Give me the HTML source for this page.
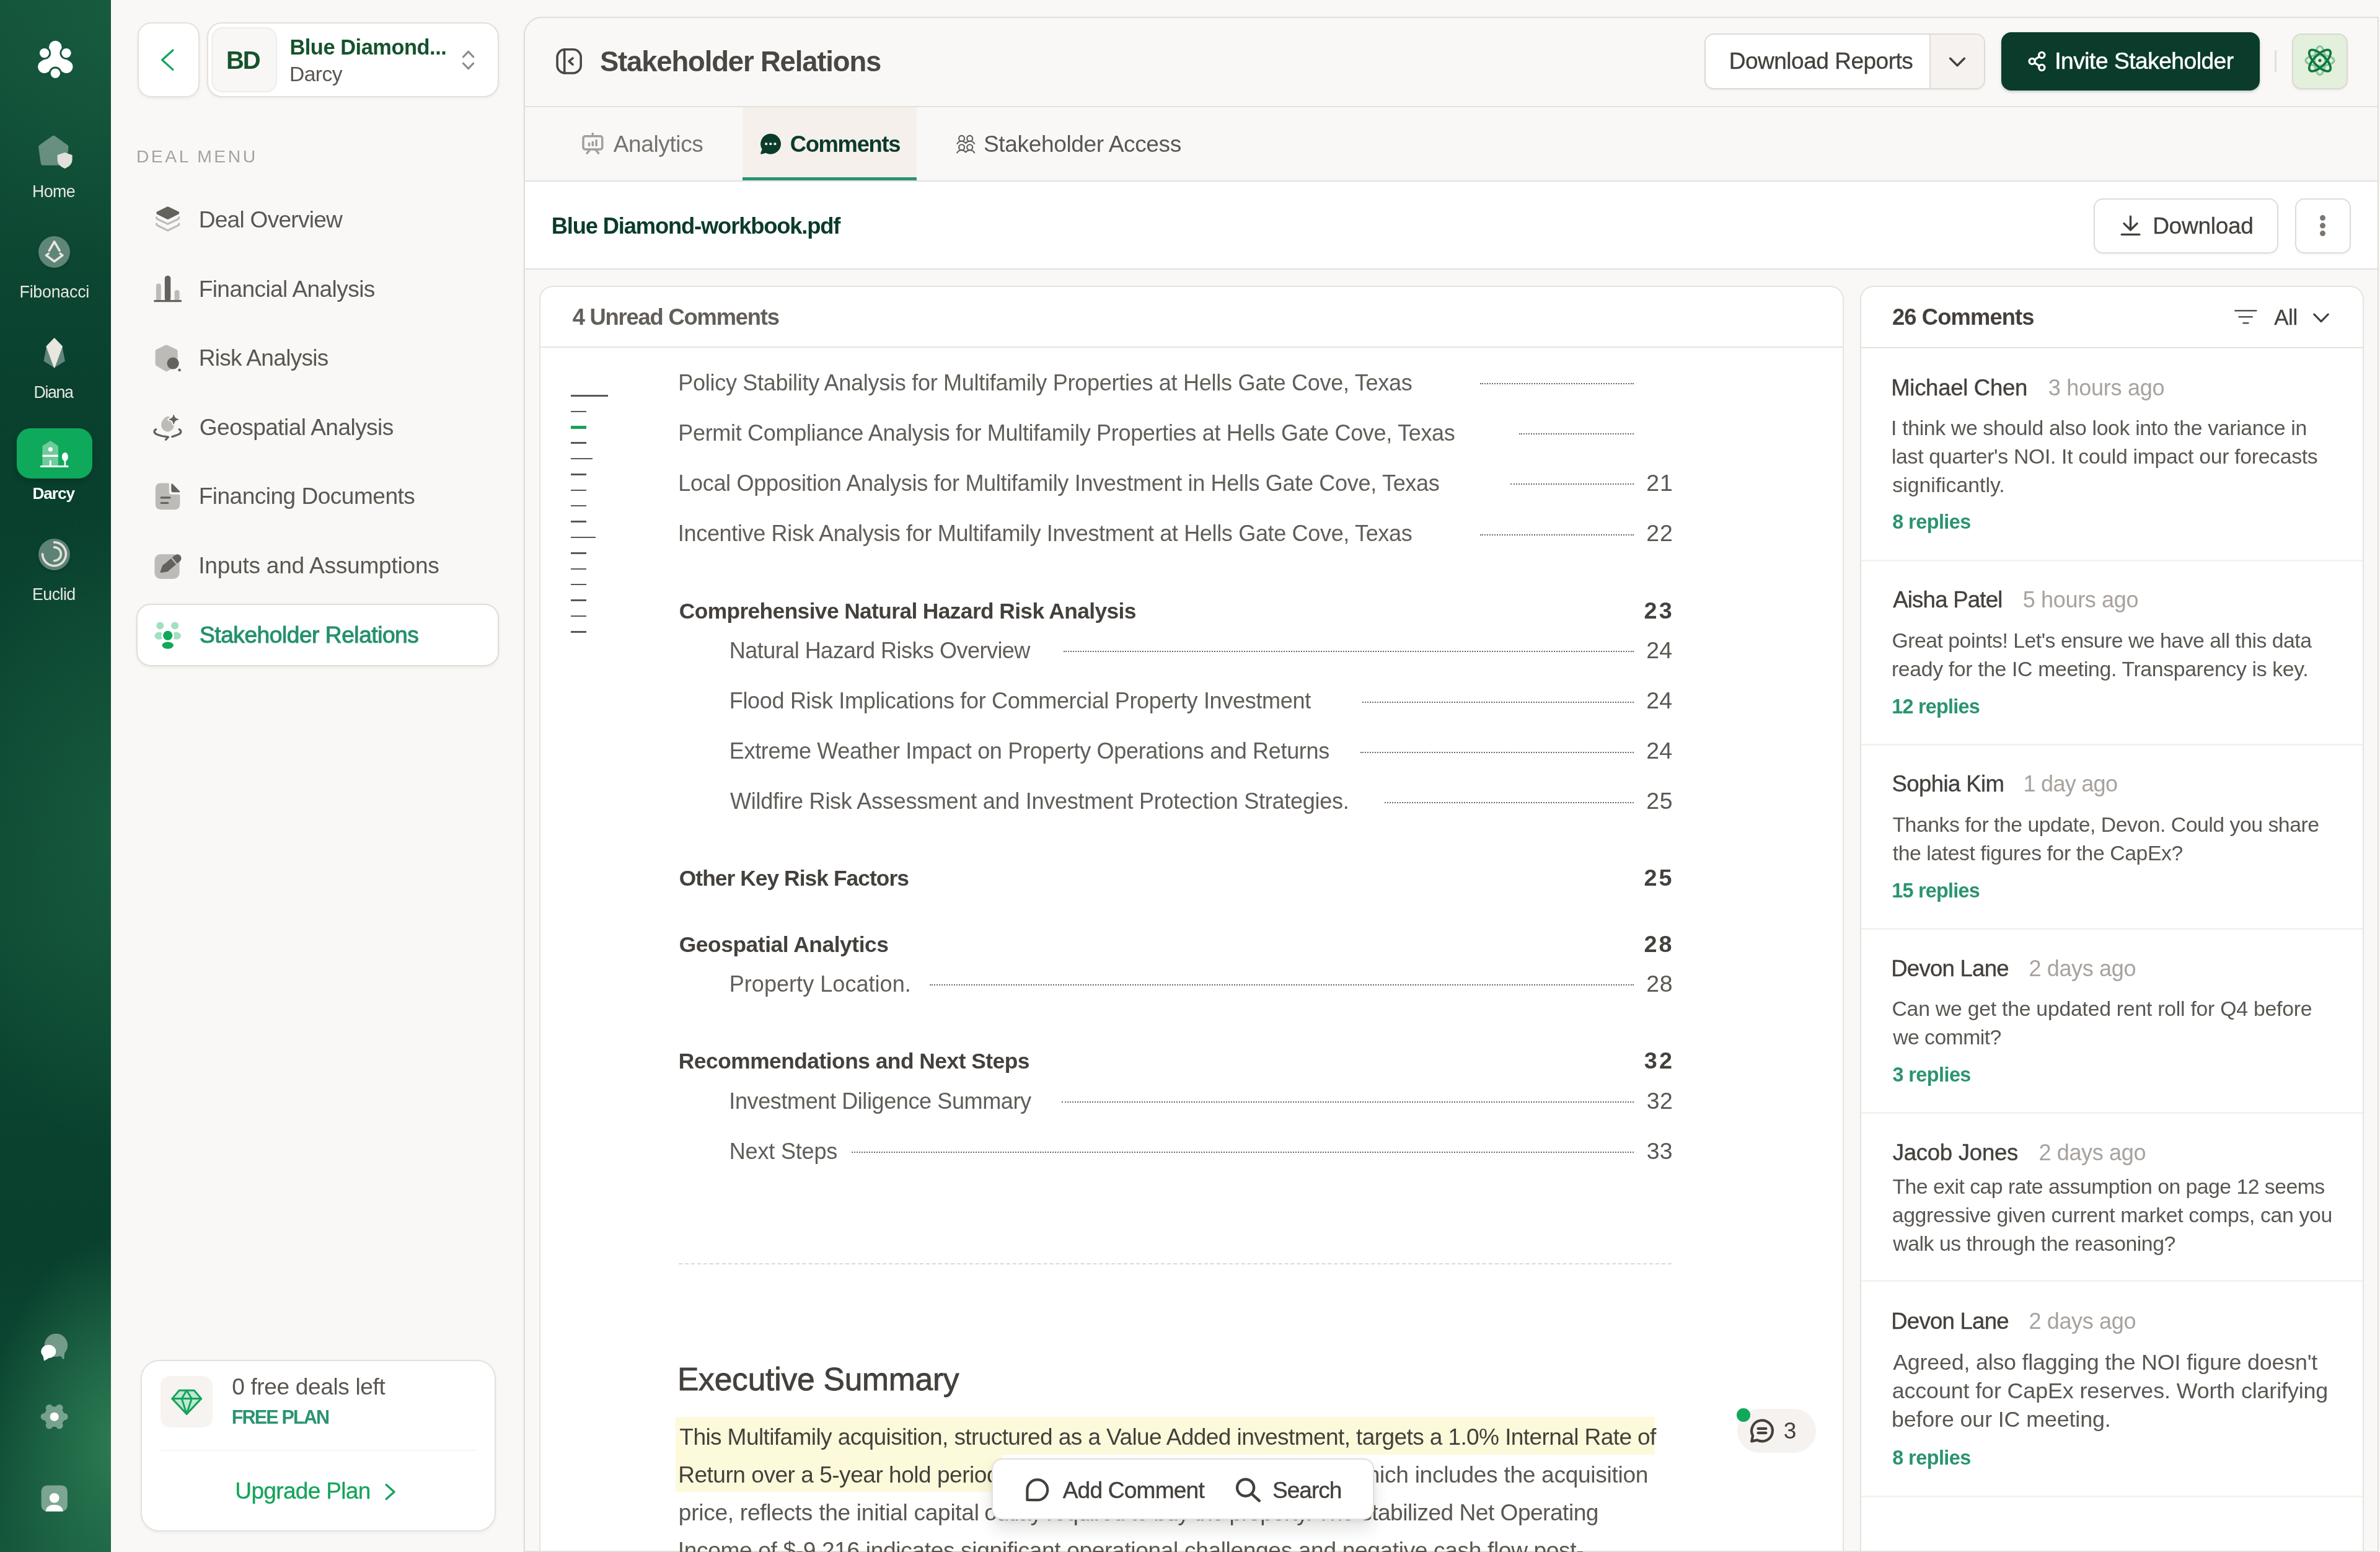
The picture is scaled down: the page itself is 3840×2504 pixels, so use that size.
<!DOCTYPE html>
<html lang="en"><head><meta charset="utf-8"><title>Stakeholder Relations</title>
<style>html,body{margin:0;padding:0}
body{width:3840px;height:2504px;overflow:hidden;background:#f9f8f6;font-family:"Liberation Sans",sans-serif;position:relative}
#app{position:absolute;left:0;top:0;width:3840px;height:2504px;overflow:hidden;will-change:transform}
.t{position:absolute;white-space:nowrap;line-height:1;font-kerning:normal}
.b{position:absolute;box-sizing:border-box}
svg{position:absolute;left:0;top:0;overflow:visible}
@media (max-width:2400px){html{zoom:0.5}}
</style></head><body><div id="app">
<!-- rail -->
<div class="b" style="left:0;top:0;width:179px;height:2504px;background:
radial-gradient(ellipse 210px 340px at 108% 2330px, #2d7d54 0%, rgba(45,125,84,0.6) 40%, rgba(45,125,84,0) 100%),
radial-gradient(ellipse 300px 520px at 110% 1340px, rgba(27,98,66,0.7) 0%, rgba(27,98,66,0) 100%),
radial-gradient(ellipse 320px 380px at 110% 30px, rgba(28,98,66,0.55) 0%, rgba(28,98,66,0) 100%),
linear-gradient(180deg,#12533a 0px,#0f4c36 260px,#09412e 620px,#083f2d 820px,#0c4632 1150px,#0e4a34 1500px,#09412e 1850px,#083f2d 2020px,#0d4933 2250px,#14573b 2504px)"></div>
<!-- darcy active button -->
<div class="b" style="left:27px;top:691px;width:122px;height:81px;border-radius:22px;background:#0fa95b;box-shadow:0 4px 10px rgba(0,0,0,0.18)"></div>
<!-- fibonacci / euclid discs -->
<div class="b" style="left:62px;top:381px;width:51px;height:51px;border-radius:50%;background:rgba(255,255,255,0.34);box-shadow:0 2px 5px rgba(0,0,0,0.18)"></div>
<div class="b" style="left:62px;top:868.5px;width:51px;height:51px;border-radius:50%;background:rgba(255,255,255,0.34);box-shadow:0 2px 5px rgba(0,0,0,0.18)"></div>

<!-- sidebar: back button + deal selector -->
<div class="b" style="left:222px;top:36px;width:100px;height:120.5px;border-radius:22px;background:#fff;border:2px solid #e5e1dd;box-shadow:0 2px 5px rgba(60,40,20,0.07)"></div>
<div class="b" style="left:333.5px;top:36px;width:471px;height:120.5px;border-radius:24px;background:#fff;border:2px solid #e3dfdb;box-shadow:0 2px 5px rgba(60,40,20,0.05)"></div>
<div class="b" style="left:341px;top:43.5px;width:105.5px;height:105.5px;border-radius:18px;background:#f9f7f5;border:2px solid #f1ece7"></div>
<!-- active menu item -->
<div class="b" style="left:220px;top:974px;width:584.5px;height:101px;border-radius:23px;background:#fff;border:2px solid #e1ddd9;box-shadow:0 2px 5px rgba(60,40,20,0.07)"></div>
<!-- plan card -->
<div class="b" style="left:227px;top:2193.5px;width:572.5px;height:277.5px;border-radius:30px;background:#fff;border:2px solid #e4e1dd;box-shadow:0 2px 5px rgba(60,40,20,0.05)"></div>
<div class="b" style="left:259px;top:2219.5px;width:84px;height:83.5px;border-radius:16px;background:#f6f3f0"></div>
<div class="b" style="left:259px;top:2339px;width:508.5px;height:2px;background:#f8f6f4"></div>

<!-- main panel -->
<div class="b" style="left:845px;top:27px;width:2993px;height:2477px;border:2px solid #e1ded9;border-top-left-radius:30px;background:#f9f8f6;box-shadow:-1px 0 2px rgba(160,110,90,0.07)"></div>
<div class="b" style="left:847px;top:171px;width:2989px;height:2px;background:#e4e1dd"></div>
<!-- active tab -->
<div class="b" style="left:1197.5px;top:173px;width:281.5px;height:118px;background:#f5f0ec"></div>
<div class="b" style="left:1197.5px;top:285.5px;width:281.5px;height:6px;background:#2a9470"></div>
<div class="b" style="left:847px;top:291px;width:2989px;height:2px;background:#e4e1dd"></div>
<!-- file header -->
<div class="b" style="left:847px;top:293px;width:2989px;height:140px;background:#fff"></div>
<div class="b" style="left:847px;top:433px;width:2989px;height:2px;background:#e4e1dd"></div>

<!-- header buttons -->
<div class="b" style="left:2750px;top:54px;width:453px;height:89.5px;border-radius:15px;background:#fff;border:2px solid #dedad5;box-shadow:0 2px 3px rgba(60,40,20,0.06);overflow:hidden">
  <div class="b" style="left:361px;top:0;width:92px;height:100%;background:#f6f2ef;border-left:2px solid #e0dcd8"></div>
</div>
<div class="b" style="left:3229px;top:52px;width:416.5px;height:93.5px;border-radius:16px;background:#0a3b2b;box-shadow:0 2px 4px rgba(10,59,43,0.25)"></div>
<div class="b" style="left:3670px;top:81px;width:2.5px;height:35px;background:#e2ded9"></div>
<div class="b" style="left:3697.5px;top:54px;width:90px;height:89.5px;border-radius:15px;background:#e3f0dc;border:2.5px solid #dcd8d3;box-shadow:0 2px 3px rgba(60,40,20,0.08)"></div>
<!-- download + kebab -->
<div class="b" style="left:3377.5px;top:319.5px;width:298px;height:89.5px;border-radius:15px;background:#fff;border:2px solid #dfdbd7;box-shadow:0 2px 3px rgba(60,40,20,0.05)"></div>
<div class="b" style="left:3702.5px;top:319.5px;width:90px;height:89.5px;border-radius:15px;background:#fff;border:2px solid #dfdbd7;box-shadow:0 2px 3px rgba(60,40,20,0.05)"></div>

<!-- document card -->
<div class="b" style="left:870px;top:461px;width:2105px;height:2041px;border:2px solid #e6e3df;border-bottom:none;border-radius:22px 22px 0 0;background:#fff"></div>
<div class="b" style="left:872px;top:559px;width:2101px;height:2px;background:#e6e3df"></div>
<!-- comments card -->
<div class="b" style="left:3000.5px;top:461px;width:813px;height:2041px;border:2px solid #e6e3df;border-bottom:none;border-radius:22px 22px 0 0;background:#fff"></div>
<div class="b" style="left:3002.5px;top:560px;width:809px;height:2px;background:#e6e3df"></div>

<!-- minimap -->
<div class="b" style="left:921px;top:637.2px;width:60px;height:2.6px;background:#5b5752"></div>
<div class="b" style="left:921px;top:662.7px;width:25px;height:2.6px;background:#5b5752"></div>
<div class="b" style="left:921px;top:687.0px;width:25px;height:5.0px;background:#16a35c"></div>
<div class="b" style="left:921px;top:713.2px;width:25px;height:2.6px;background:#5b5752"></div>
<div class="b" style="left:921px;top:738.7px;width:35px;height:2.6px;background:#5b5752"></div>
<div class="b" style="left:921px;top:764.2px;width:25px;height:2.6px;background:#5b5752"></div>
<div class="b" style="left:921px;top:789.7px;width:25px;height:2.6px;background:#5b5752"></div>
<div class="b" style="left:921px;top:814.7px;width:25px;height:2.6px;background:#5b5752"></div>
<div class="b" style="left:921px;top:840.2px;width:25px;height:2.6px;background:#5b5752"></div>
<div class="b" style="left:921px;top:865.7px;width:40px;height:2.6px;background:#5b5752"></div>
<div class="b" style="left:921px;top:891.2px;width:25px;height:2.6px;background:#5b5752"></div>
<div class="b" style="left:921px;top:916.7px;width:25px;height:2.6px;background:#5b5752"></div>
<div class="b" style="left:921px;top:941.7px;width:25px;height:2.6px;background:#5b5752"></div>
<div class="b" style="left:921px;top:967.2px;width:25px;height:2.6px;background:#5b5752"></div>
<div class="b" style="left:921px;top:992.7px;width:25px;height:2.6px;background:#5b5752"></div>
<div class="b" style="left:921px;top:1018.2px;width:25px;height:2.6px;background:#5b5752"></div>

<!-- dashed separator -->
<div class="b" style="left:1095px;top:2038px;width:1602px;height:0;border-top:2.5px dashed #dcd9d5"></div>
<!-- highlight -->
<div class="b" style="left:1090px;top:2285.5px;width:1580px;height:61px;background:#fdfadb"></div>
<div class="b" style="left:1090px;top:2346.5px;width:526px;height:60.5px;background:#fdfadb"></div>
<!-- comment badge -->
<div class="b" style="left:2802.5px;top:2273px;width:127px;height:71px;border-radius:36px;background:#f5f2ef"></div>
<div class="b" style="left:2802px;top:2272px;width:22px;height:22px;border-radius:50%;background:#10a85a"></div>
<div class="b" style="left:2387.5px;top:618.3px;width:248.5px;height:0;border-top:2.5px dotted #6b6762"></div>
<div class="b" style="left:2450.5px;top:699.3px;width:185.5px;height:0;border-top:2.5px dotted #6b6762"></div>
<div class="b" style="left:2437.0px;top:780.3px;width:199.0px;height:0;border-top:2.5px dotted #6b6762"></div>
<div class="b" style="left:2387.5px;top:861.8px;width:248.5px;height:0;border-top:2.5px dotted #6b6762"></div>
<div class="b" style="left:1716.0px;top:1050.3px;width:920.0px;height:0;border-top:2.5px dotted #6b6762"></div>
<div class="b" style="left:2197.5px;top:1131.8px;width:438.5px;height:0;border-top:2.5px dotted #6b6762"></div>
<div class="b" style="left:2195.0px;top:1212.8px;width:441.0px;height:0;border-top:2.5px dotted #6b6762"></div>
<div class="b" style="left:2233.5px;top:1293.8px;width:402.5px;height:0;border-top:2.5px dotted #6b6762"></div>
<div class="b" style="left:1500.0px;top:1588.3px;width:1136.0px;height:0;border-top:2.5px dotted #6b6762"></div>
<div class="b" style="left:1712.5px;top:1777.3px;width:923.5px;height:0;border-top:2.5px dotted #6b6762"></div>
<div class="b" style="left:1374.0px;top:1858.3px;width:1262.0px;height:0;border-top:2.5px dotted #6b6762"></div>
<div class="b" style="left:3002.5px;top:902.5px;width:809px;height:3px;background:#f5f3f0"></div>
<div class="b" style="left:3002.5px;top:1199.5px;width:809px;height:3px;background:#f5f3f0"></div>
<div class="b" style="left:3002.5px;top:1497.0px;width:809px;height:3px;background:#f5f3f0"></div>
<div class="b" style="left:3002.5px;top:1793.5px;width:809px;height:3px;background:#f5f3f0"></div>
<div class="b" style="left:3002.5px;top:2065.0px;width:809px;height:3px;background:#f5f3f0"></div>
<div class="b" style="left:3002.5px;top:2413.0px;width:809px;height:3px;background:#f5f3f0"></div>
<span id="t0" class="t" style="font-size:26.78px;color:#e9e7e2;top:296.25px;letter-spacing:-0.573px;left:52.00px;">Home</span>
<span id="t1" class="t" style="font-size:26.78px;color:#e9e7e2;top:458.25px;letter-spacing:-0.220px;left:31.50px;">Fibonacci</span>
<span id="t2" class="t" style="font-size:26.78px;color:#e9e7e2;top:620.25px;letter-spacing:-1.360px;left:54.50px;">Diana</span>
<span id="t3" class="t" style="font-size:26.26px;color:#ffffff;top:783.26px;font-weight:700;letter-spacing:-1.072px;left:52.44px;">Darcy</span>
<span id="t4" class="t" style="font-size:26.78px;color:#e9e7e2;top:946.25px;letter-spacing:-0.537px;left:52.00px;">Euclid</span>
<span id="t5" class="t" style="font-size:40.00px;color:#14532d;top:77.27px;font-weight:700;letter-spacing:-2.126px;left:365.02px;">BD</span>
<span id="t6" class="t" style="font-size:34.41px;color:#14532d;top:59.26px;font-weight:700;letter-spacing:-0.465px;left:467.40px;">Blue Diamond...</span>
<span id="t7" class="t" style="font-size:33.60px;color:#5a5651;top:103.26px;letter-spacing:-0.516px;left:466.94px;">Darcy</span>
<span id="t8" class="t" style="font-size:28.32px;color:#a8a29e;top:238.26px;letter-spacing:3.521px;left:219.88px;">DEAL MENU</span>
<span id="t9" class="t" style="font-size:37.08px;color:#5a5651;top:336.25px;letter-spacing:-0.737px;left:320.66px;">Deal Overview</span>
<span id="t10" class="t" style="font-size:37.08px;color:#5a5651;top:448.25px;letter-spacing:-0.590px;left:320.66px;">Financial Analysis</span>
<span id="t11" class="t" style="font-size:37.08px;color:#5a5651;top:559.25px;letter-spacing:-0.728px;left:320.66px;">Risk Analysis</span>
<span id="t12" class="t" style="font-size:37.08px;color:#5a5651;top:671.25px;letter-spacing:-0.561px;left:321.84px;">Geospatial Analysis</span>
<span id="t13" class="t" style="font-size:37.08px;color:#5a5651;top:782.25px;letter-spacing:-0.524px;left:320.66px;">Financing Documents</span>
<span id="t14" class="t" style="font-size:37.08px;color:#5a5651;top:894.25px;letter-spacing:-0.244px;left:320.28px;">Inputs and Assumptions</span>
<span id="t15" class="t" style="font-size:37.08px;color:#24916b;top:1006.25px;letter-spacing:-0.447px;left:322.02px;-webkit-text-stroke:1.00px #24916b;">Stakeholder Relations</span>
<span id="t16" class="t" style="font-size:37.08px;color:#5a5651;top:2219.25px;letter-spacing:-0.376px;left:374.25px;">0 free deals left</span>
<span id="t17" class="t" style="font-size:30.60px;color:#2a9470;top:2271.25px;font-weight:700;letter-spacing:-1.871px;left:373.65px;">FREE PLAN</span>
<span id="t18" class="t" style="font-size:37.08px;color:#16a35c;top:2387.25px;letter-spacing:-0.698px;left:379.34px;-webkit-text-stroke:0.30px #16a35c;">Upgrade Plan</span>
<span id="t19" class="t" style="font-size:45.45px;color:#4a4642;top:77.26px;font-weight:700;letter-spacing:-1.138px;left:967.89px;">Stakeholder Relations</span>
<span id="t20" class="t" style="font-size:37.08px;color:#44403c;top:80.25px;letter-spacing:-0.523px;left:2789.66px;-webkit-text-stroke:0.30px #44403c;">Download Reports</span>
<span id="t21" class="t" style="font-size:37.08px;color:#ffffff;top:80.25px;letter-spacing:-0.469px;left:3315.28px;-webkit-text-stroke:0.50px #ffffff;">Invite Stakeholder</span>
<span id="t22" class="t" style="font-size:37.08px;color:#78716c;top:214.25px;letter-spacing:-0.395px;left:989.63px;">Analytics</span>
<span id="t23" class="t" style="font-size:36.36px;color:#0a3b2b;top:215.25px;font-weight:700;letter-spacing:-1.301px;left:1274.71px;">Comments</span>
<span id="t24" class="t" style="font-size:37.08px;color:#5a5651;top:214.25px;letter-spacing:-0.373px;left:1587.02px;">Stakeholder Access</span>
<span id="t25" class="t" style="font-size:36.36px;color:#0a3b2b;top:347.25px;font-weight:700;letter-spacing:-1.176px;left:889.77px;">Blue Diamond-workbook.pdf</span>
<span id="t26" class="t" style="font-size:37.08px;color:#44403c;top:346.25px;letter-spacing:-0.311px;left:3473.16px;-webkit-text-stroke:0.30px #44403c;">Download</span>
<span id="t27" class="t" style="font-size:36.36px;color:#625e59;top:494.26px;font-weight:700;letter-spacing:-1.203px;left:923.65px;">4 Unread Comments</span>
<span id="t28" class="t" style="font-size:36.05px;color:#615d58;top:600.27px;letter-spacing:-0.296px;left:1094.24px;">Policy Stability Analysis for Multifamily Properties at Hells Gate Cove, Texas</span>
<span id="t29" class="t" style="font-size:36.05px;color:#615d58;top:681.27px;letter-spacing:-0.332px;left:1094.24px;">Permit Compliance Analysis for Multifamily Properties at Hells Gate Cove, Texas</span>
<span id="t30" class="t" style="font-size:36.05px;color:#615d58;top:762.27px;letter-spacing:-0.324px;left:1094.24px;">Local Opposition Analysis for Multifamily Investment in Hells Gate Cove, Texas</span>
<span id="t31" class="t" style="font-size:37.45px;color:#5a5651;top:761.25px;letter-spacing:0.800px;left:2656.32px;">21</span>
<span id="t32" class="t" style="font-size:36.05px;color:#615d58;top:843.27px;letter-spacing:-0.353px;left:1093.87px;">Incentive Risk Analysis for Multifamily Investment at Hells Gate Cove, Texas</span>
<span id="t33" class="t" style="font-size:37.45px;color:#5a5651;top:842.25px;letter-spacing:0.911px;left:2656.32px;">22</span>
<span id="t34" class="t" style="font-size:35.35px;color:#44403c;top:968.25px;font-weight:700;letter-spacing:-0.604px;left:1095.75px;">Comprehensive Natural Hazard Risk Analysis</span>
<span id="t35" class="t" style="font-size:37.80px;color:#44403c;top:967.26px;font-weight:700;letter-spacing:3.429px;left:2652.39px;">23</span>
<span id="t36" class="t" style="font-size:35.35px;color:#44403c;top:1399.25px;font-weight:700;letter-spacing:-0.929px;left:1095.75px;">Other Key Risk Factors</span>
<span id="t37" class="t" style="font-size:37.80px;color:#44403c;top:1398.26px;font-weight:700;letter-spacing:3.116px;left:2652.39px;">25</span>
<span id="t38" class="t" style="font-size:35.35px;color:#44403c;top:1506.25px;font-weight:700;letter-spacing:-0.422px;left:1095.75px;">Geospatial Analytics</span>
<span id="t39" class="t" style="font-size:37.80px;color:#44403c;top:1505.26px;font-weight:700;letter-spacing:3.226px;left:2652.39px;">28</span>
<span id="t40" class="t" style="font-size:35.35px;color:#44403c;top:1694.25px;font-weight:700;letter-spacing:-0.499px;left:1094.84px;">Recommendations and Next Steps</span>
<span id="t41" class="t" style="font-size:37.80px;color:#44403c;top:1693.26px;font-weight:700;letter-spacing:3.134px;left:2652.83px;">32</span>
<span id="t42" class="t" style="font-size:36.05px;color:#615d58;top:1032.27px;letter-spacing:-0.540px;left:1176.74px;">Natural Hazard Risks Overview</span>
<span id="t43" class="t" style="font-size:37.45px;color:#5a5651;top:1031.25px;letter-spacing:0.124px;left:2656.32px;">24</span>
<span id="t44" class="t" style="font-size:36.05px;color:#615d58;top:1113.27px;letter-spacing:-0.334px;left:1176.74px;">Flood Risk Implications for Commercial Property Investment</span>
<span id="t45" class="t" style="font-size:37.45px;color:#5a5651;top:1112.25px;letter-spacing:0.124px;left:2656.32px;">24</span>
<span id="t46" class="t" style="font-size:36.05px;color:#615d58;top:1194.27px;letter-spacing:-0.331px;left:1176.74px;">Extreme Weather Impact on Property Operations and Returns</span>
<span id="t47" class="t" style="font-size:37.45px;color:#5a5651;top:1193.25px;letter-spacing:0.124px;left:2656.32px;">24</span>
<span id="t48" class="t" style="font-size:36.05px;color:#615d58;top:1275.27px;letter-spacing:-0.277px;left:1177.94px;">Wildfire Risk Assessment and Investment Protection Strategies.</span>
<span id="t49" class="t" style="font-size:37.45px;color:#5a5651;top:1274.25px;letter-spacing:0.600px;left:2656.32px;">25</span>
<span id="t50" class="t" style="font-size:36.05px;color:#615d58;top:1570.27px;letter-spacing:0.030px;left:1176.74px;">Property Location.</span>
<span id="t51" class="t" style="font-size:37.45px;color:#5a5651;top:1569.25px;letter-spacing:0.655px;left:2656.32px;">28</span>
<span id="t52" class="t" style="font-size:36.05px;color:#615d58;top:1759.27px;letter-spacing:-0.413px;left:1176.37px;">Investment Diligence Summary</span>
<span id="t53" class="t" style="font-size:37.45px;color:#5a5651;top:1758.25px;letter-spacing:0.454px;left:2656.77px;">32</span>
<span id="t54" class="t" style="font-size:36.05px;color:#615d58;top:1840.27px;letter-spacing:-0.195px;left:1176.74px;">Next Steps</span>
<span id="t55" class="t" style="font-size:37.45px;color:#5a5651;top:1839.25px;letter-spacing:0.216px;left:2656.77px;">33</span>
<span id="t56" class="t" style="font-size:51.50px;color:#44403c;top:2200.25px;letter-spacing:-0.206px;left:1092.98px;-webkit-text-stroke:0.80px #44403c;">Executive Summary</span>
<span id="t57" class="t" style="font-size:37.08px;color:#44403c;top:2300.26px;letter-spacing:-0.617px;left:1096.37px;">This Multifamily acquisition, structured as a Value Added investment, targets a 1.0% Internal Rate of</span>
<span id="t58" class="t" style="font-size:37.08px;color:#44403c;top:2361.26px;letter-spacing:-0.497px;left:1094.16px;">Return over a 5-year hold period.</span>
<span id="t59" class="t" style="font-size:37.08px;color:#5a5651;top:2361.26px;letter-spacing:-1.850px;left:1644.37px;">The total project cost of $4,250,000,</span>
<span id="t60" class="t" style="font-size:37.08px;color:#5a5651;top:2361.26px;letter-spacing:-0.287px;left:2179.25px;">which includes the acquisition</span>
<span id="t61" class="t" style="font-size:37.08px;color:#5a5651;top:2422.26px;letter-spacing:-0.278px;left:1094.81px;">price, reflects the initial capital</span>
<span id="t62" class="t" style="font-size:37.08px;color:#5a5651;top:2422.26px;letter-spacing:-1.244px;left:1588.34px;">outlay required to buy the property. The</span>
<span id="t63" class="t" style="font-size:37.08px;color:#5a5651;top:2422.26px;letter-spacing:-0.500px;left:2195.17px;">stabilized Net Operating</span>
<span id="t64" class="t" style="font-size:37.08px;color:#5a5651;top:2483.26px;letter-spacing:-0.338px;left:1093.78px;">Income of $-9,216 indicates significant operational challenges and negative cash flow post-</span>
<span id="t65" class="t" style="font-size:37.08px;color:#44403c;top:2290.25px;left:2877.79px;">3</span>
<span id="t68" class="t" style="font-size:36.36px;color:#44403c;top:494.25px;font-weight:700;letter-spacing:-0.889px;left:3052.94px;">26 Comments</span>
<span id="t69" class="t" style="font-size:34.92px;color:#44403c;top:495.25px;letter-spacing:-0.296px;left:3669.13px;-webkit-text-stroke:0.30px #44403c;">All</span>
<span id="t70" class="t" style="font-size:36.56px;color:#44403c;top:608.25px;letter-spacing:-0.300px;left:3051.20px;-webkit-text-stroke:0.40px #44403c;">Michael Chen</span>
<span id="t71" class="t" style="font-size:36.05px;color:#a8a29e;top:608.26px;letter-spacing:-0.270px;left:3304.83px;">3 hours ago</span>
<span id="t72" class="t" style="font-size:33.78px;color:#5a5651;top:674.26px;letter-spacing:-0.338px;left:3051.08px;">I think we should also look into the variance in</span>
<span id="t73" class="t" style="font-size:33.78px;color:#5a5651;top:720.26px;letter-spacing:-0.310px;left:3051.92px;">last quarter's NOI. It could impact our forecasts</span>
<span id="t74" class="t" style="font-size:33.78px;color:#5a5651;top:766.26px;left:3053.26px;">significantly.</span>
<span id="t75" class="t" style="font-size:32.32px;color:#2a9470;top:826.27px;font-weight:700;letter-spacing:-0.499px;left:3053.17px;">8 replies</span>
<span id="t76" class="t" style="font-size:36.56px;color:#44403c;top:950.25px;letter-spacing:-0.757px;left:3054.13px;-webkit-text-stroke:0.40px #44403c;">Aisha Patel</span>
<span id="t77" class="t" style="font-size:36.05px;color:#a8a29e;top:950.26px;letter-spacing:-0.363px;left:3263.76px;">5 hours ago</span>
<span id="t78" class="t" style="font-size:33.78px;color:#5a5651;top:1017.26px;letter-spacing:-0.498px;left:3052.50px;">Great points! Let's ensure we have all this data</span>
<span id="t79" class="t" style="font-size:33.78px;color:#5a5651;top:1063.26px;letter-spacing:-0.344px;left:3051.96px;">ready for the IC meeting. Transparency is key.</span>
<span id="t80" class="t" style="font-size:32.32px;color:#2a9470;top:1124.27px;font-weight:700;letter-spacing:-0.716px;left:3052.16px;">12 replies</span>
<span id="t81" class="t" style="font-size:36.56px;color:#44403c;top:1247.25px;letter-spacing:-0.615px;left:3052.54px;-webkit-text-stroke:0.40px #44403c;">Sophia Kim</span>
<span id="t82" class="t" style="font-size:36.05px;color:#a8a29e;top:1247.26px;letter-spacing:-0.723px;left:3264.45px;">1 day ago</span>
<span id="t83" class="t" style="font-size:33.78px;color:#5a5651;top:1314.26px;letter-spacing:-0.476px;left:3053.44px;">Thanks for the update, Devon. Could you share</span>
<span id="t84" class="t" style="font-size:33.78px;color:#5a5651;top:1360.26px;letter-spacing:-0.432px;left:3053.69px;">the latest figures for the CapEx?</span>
<span id="t85" class="t" style="font-size:32.32px;color:#2a9470;top:1421.27px;font-weight:700;letter-spacing:-0.716px;left:3052.16px;">15 replies</span>
<span id="t86" class="t" style="font-size:36.56px;color:#44403c;top:1545.25px;letter-spacing:-0.743px;left:3051.20px;-webkit-text-stroke:0.40px #44403c;">Devon Lane</span>
<span id="t87" class="t" style="font-size:36.05px;color:#a8a29e;top:1545.26px;letter-spacing:-0.361px;left:3273.39px;">2 days ago</span>
<span id="t88" class="t" style="font-size:33.78px;color:#5a5651;top:1611.26px;letter-spacing:-0.241px;left:3052.48px;">Can we get the updated rent roll for Q4 before</span>
<span id="t89" class="t" style="font-size:33.78px;color:#5a5651;top:1657.26px;letter-spacing:-0.569px;left:3054.25px;">we commit?</span>
<span id="t90" class="t" style="font-size:32.32px;color:#2a9470;top:1718.27px;font-weight:700;letter-spacing:-0.534px;left:3053.46px;">3 replies</span>
<span id="t91" class="t" style="font-size:36.56px;color:#44403c;top:1842.25px;letter-spacing:-0.251px;left:3053.63px;-webkit-text-stroke:0.40px #44403c;">Jacob Jones</span>
<span id="t92" class="t" style="font-size:36.05px;color:#a8a29e;top:1842.26px;letter-spacing:-0.361px;left:3289.39px;">2 days ago</span>
<span id="t93" class="t" style="font-size:33.78px;color:#5a5651;top:1898.26px;letter-spacing:-0.522px;left:3053.44px;">The exit cap rate assumption on page 12 seems</span>
<span id="t94" class="t" style="font-size:33.78px;color:#5a5651;top:1944.26px;letter-spacing:-0.352px;left:3052.76px;">aggressive given current market comps, can you</span>
<span id="t95" class="t" style="font-size:33.78px;color:#5a5651;top:1990.26px;letter-spacing:-0.458px;left:3054.25px;">walk us through the reasoning?</span>
<span id="t96" class="t" style="font-size:36.56px;color:#44403c;top:2114.25px;letter-spacing:-0.743px;left:3051.20px;-webkit-text-stroke:0.40px #44403c;">Devon Lane</span>
<span id="t97" class="t" style="font-size:36.05px;color:#a8a29e;top:2114.26px;letter-spacing:-0.361px;left:3273.39px;">2 days ago</span>
<span id="t98" class="t" style="font-size:35.84px;color:#5a5651;top:2181.25px;letter-spacing:-0.206px;left:3054.13px;">Agreed, also flagging the NOI figure doesn't</span>
<span id="t99" class="t" style="font-size:35.84px;color:#5a5651;top:2227.25px;letter-spacing:-0.107px;left:3052.68px;">account for CapEx reserves. Worth clarifying</span>
<span id="t100" class="t" style="font-size:35.84px;color:#5a5651;top:2273.25px;letter-spacing:-0.124px;left:3051.89px;">before our IC meeting.</span>
<span id="t101" class="t" style="font-size:32.32px;color:#2a9470;top:2336.27px;font-weight:700;letter-spacing:-0.499px;left:3053.17px;">8 replies</span>
<svg width="3840" height="2504" viewBox="0 0 3840 2504" fill="none" stroke-linecap="round" stroke-linejoin="round">
<!-- ===== logo ===== -->
<g>
  <path d="M89.3,97.2 L89.3,76 M89.3,97.2 L71.3,107.8 M89.3,97.2 L107.3,107.8" stroke="#fff" stroke-width="20.5"/>
  <circle cx="89.3" cy="97.5" r="11" fill="#fff"/>
  <circle cx="71.6" cy="85.6" r="10.6" fill="#14563b"/>
  <circle cx="107" cy="85.6" r="10.6" fill="#14563b"/>
  <circle cx="89.3" cy="118.2" r="10.6" fill="#13553a"/>
  <circle cx="71.6" cy="85.6" r="7.7" fill="#fff"/>
  <circle cx="107" cy="85.6" r="7.7" fill="#fff"/>
  <circle cx="89.3" cy="118.2" r="7.7" fill="#fff"/>
</g>
<!-- ===== home ===== -->
<g opacity="0.36"><polygon points="86.4,223.5 106,237.5 102.8,262.3 70.2,262.3 66.7,237.5" fill="#fff" stroke="#fff" stroke-width="9"/></g>
<path d="M104.5,246 L115.6,249.8 Q116.6,250.2 116.6,251.3 L116.6,258 Q116.6,267 104.5,272 Q92.6,267 92.6,258 L92.6,251.3 Q92.6,250.2 93.6,249.8 Z" fill="#e3e0da"/>
<!-- ===== fibonacci glyph ===== -->
<path d="M79.3,404.3 L87.7,390 L96.1,404.3 M78.3,409.1 L74.4,411.9 L87.7,421.8 L101,411.9 L97.1,409.1" stroke="#e9e6e0" stroke-width="3.6"/>
<!-- ===== diana gem ===== -->
<polygon points="75.1,559 70.6,582.6 87.7,593.2" fill="rgba(255,255,255,0.36)" stroke="rgba(255,255,255,0.36)" stroke-width="0.1"/>
<polygon points="100.4,559 104.9,582.6 87.7,593.2" fill="rgba(255,255,255,0.36)"/>
<polygon points="87.7,546 100.2,559 87.7,592.8 75.2,559" fill="#e9e6e0" stroke="#e9e6e0" stroke-width="1.6"/>
<!-- ===== darcy building ===== -->
<polygon points="68.5,751 68.5,719.5 81.3,711.3 93.9,719.5 93.9,751" fill="rgba(255,255,255,0.4)" stroke="rgba(255,255,255,0.4)" stroke-width="0.1"/>
<rect x="68.5" y="733.8" width="25.4" height="3.2" fill="#fff"/>
<circle cx="81.3" cy="725" r="3.6" fill="#fff"/>
<rect x="79.8" y="742.8" width="3" height="8.4" fill="#fff"/>
<path d="M66.3,752.6 L109.2,752.6" stroke="#fff" stroke-width="3"/>
<ellipse cx="104.9" cy="737" rx="5" ry="7" fill="#fff"/>
<path d="M104.9,737 L104.9,751" stroke="#fff" stroke-width="2.6"/>
<!-- ===== euclid arcs ===== -->
<path d="M87.5,874.9 A18.9,18.9 0 1 1 68.6,893.8 M87.5,882.9 A10.9,10.9 0 0 1 87.5,904.7" stroke="#e3e0da" stroke-width="3.6"/>
<!-- ===== chat ===== -->
<g opacity="0.4"><circle cx="90.4" cy="2170.4" r="18.7" fill="#fff"/><path d="M96,2184 L102.3,2192 L103.5,2180 Z" fill="#fff" stroke="#fff" stroke-width="2"/></g>
<ellipse cx="78.3" cy="2180.4" rx="12" ry="10.6" fill="#fff"/>
<path d="M70,2186 L71.6,2194.6 L80,2189.5 Z" fill="#fff" stroke="#fff" stroke-width="1.5"/>
<!-- ===== gear ===== -->
<g opacity="0.4" stroke="#fff" stroke-width="11.6">
  <circle cx="87.7" cy="2285.7" r="16.4" fill="#fff" stroke="none"/>
  <path d="M99.7,2285.7 L103.9,2285.7 M93.7,2296.1 L95.8,2299.7 M81.7,2296.1 L79.6,2299.7 M75.7,2285.7 L71.5,2285.7 M81.7,2275.3 L79.6,2271.7 M93.7,2275.3 L95.8,2271.7"/>
</g>
<circle cx="87.7" cy="2285.7" r="7" fill="#fff"/>
<!-- ===== user ===== -->
<g opacity="0.42"><rect x="66.6" y="2396.4" width="42.2" height="42.2" rx="9.5" fill="#fff"/></g>
<circle cx="87.7" cy="2416.8" r="7.9" fill="#fff"/>
<path d="M73.6,2438.6 Q75,2427.8 87.7,2427.8 Q100.4,2427.8 101.8,2438.6 Z" fill="#fff"/>

<!-- ===== sidebar: back chevron, selector chevrons ===== -->
<path d="M279,81 L261.6,96.7 L279,112.4" stroke="#16a35c" stroke-width="3.2"/>
<path d="M747.5,91.8 L755.6,83.2 L763.7,91.8 M747.5,102.2 L755.6,110.8 L763.7,102.2" stroke="#8c8782" stroke-width="3"/>

<!-- ===== menu icons ===== -->
<!-- layers -->
<polygon points="270.7,335.8 286.6,343.6 270.7,351.4 254.8,343.6" fill="#65625e" stroke="#65625e" stroke-width="5"/>
<path d="M252.5,350.9 Q252.3,352.6 254,353.5 L270.7,361.4 L287.4,353.5 Q289.1,352.6 288.9,350.9 M252.5,361.1 Q252.3,362.8 254,363.7 L270.7,371.8 L287.4,363.7 Q289.1,362.8 288.9,361.1" stroke="#bdbbb8" stroke-width="3.1"/>
<!-- bars -->
<rect x="251.9" y="457.4" width="7.9" height="28" rx="3.9" fill="#bdbbb8"/>
<rect x="281.6" y="468" width="8" height="18" rx="3.9" fill="#bdbbb8"/>
<rect x="265.8" y="444.7" width="9.5" height="41" rx="4.5" fill="#65625e"/>
<path d="M249.6,485.6 L291.7,485.6" stroke="#65625e" stroke-width="3.2"/>
<!-- risk -->
<polygon points="268.4,559.4 283.6,566.4 283.6,587.6 268.4,596.4 253.6,587.6 253.6,566.4" fill="#bdbbb8" stroke="#bdbbb8" stroke-width="6"/>
<circle cx="279.1" cy="586.2" r="9.6" fill="#65625e"/>
<circle cx="289.6" cy="597" r="2.3" fill="#65625e"/>
<!-- geospatial -->
<path d="M270.2,671.9 Q271.6,671.6 273.2,672.6 C278.6,675.6 280.9,680.6 280.9,686 A10.4,10.4 0 0 1 260.1,686 C260.1,680.4 263.6,675.6 268.2,672.6 Q269.2,672 270.2,671.9 Z" fill="#bdbbb8"/>
<path d="M280.3,669.6 Q281.3,675.7 287.5,676.7 Q281.3,677.7 280.3,683.8 Q279.3,677.7 273.1,676.7 Q279.3,675.7 280.3,669.6 Z" fill="#f9f8f6" stroke="#f9f8f6" stroke-width="5.4"/>
<path d="M280.3,669.6 Q281.3,675.7 287.5,676.7 Q281.3,677.7 280.3,683.8 Q279.3,677.7 273.1,676.7 Q279.3,675.7 280.3,669.6 Z" fill="#65625e" stroke="#65625e" stroke-width="1.3"/>
<path d="M251.6,692.7 C247.4,695.6 248.4,699 254,701.3 C259,703.4 265,704.7 271.4,705.1 L267.5,709.3 M271.4,705.1 L267.4,704.4 M289.2,692.7 C293.4,695.6 292.6,699 287,701.3 C283.6,702.7 280.5,703.8 277.8,704.6" stroke="#65625e" stroke-width="3.3"/>
<!-- financing doc -->
<path d="M259.8,779.6 H271.2 Q272.8,779.6 272.8,781.2 V793.4 Q272.8,797.8 277.2,797.8 H288.8 Q290.4,797.8 290.4,799.4 V813.3 Q290.4,822.3 281.4,822.3 H259.8 Q250.8,822.3 250.8,813.3 V788.6 Q250.8,779.6 259.8,779.6 Z" fill="#bdbbb8"/>
<path d="M277.4,781.4 L289.2,793.2 H279.4 Q277.4,793.2 277.4,791.2 Z" fill="#65625e" stroke="#65625e" stroke-width="2.2"/>
<path d="M260.1,802.9 H274.1 M260.1,811.5 H270.8" stroke="#65625e" stroke-width="3.2"/>
<!-- inputs (pencil) -->
<rect x="249.4" y="894.3" width="40.2" height="39.6" rx="9.5" fill="#bdbbb8"/>
<path d="M266.9,916.8 L286.2,900.7" stroke="#65625e" stroke-width="12.8" stroke-linecap="butt"/>
<circle cx="286.2" cy="900.7" r="6.4" fill="#65625e"/>
<path d="M259.6,922.9 L263.3,912.4 L270.6,921.2 Z" fill="#65625e" stroke="#65625e" stroke-width="2.2"/>
<path d="M276.4,899.8 L285.4,910.6" stroke="#bdbbb8" stroke-width="2.4" stroke-linecap="butt"/>
<!-- stakeholder relations (green) -->
<circle cx="258.3" cy="1009.4" r="6" fill="#a3dfc0"/>
<circle cx="282.1" cy="1009.4" r="6" fill="#a3dfc0"/>
<ellipse cx="257" cy="1025.7" rx="7.6" ry="6" fill="#a3dfc0"/>
<ellipse cx="284.4" cy="1025.7" rx="7.6" ry="6" fill="#a3dfc0"/>
<circle cx="270.7" cy="1025.3" r="10.4" fill="#fff"/>
<circle cx="270.7" cy="1025.3" r="7.6" fill="#10a85a"/>
<ellipse cx="270.7" cy="1041.2" rx="9.2" ry="5.6" fill="#10a85a"/>

<!-- ===== plan card: diamond + chevron ===== -->
<polygon points="289.2,2243.2 313.2,2243.2 324.6,2256.6 301.2,2281.4 277.8,2256.6" fill="#bfe8d3" stroke="#16a35c" stroke-width="3"/>
<path d="M277.8,2256.6 H324.6 M301.2,2243.2 L293.2,2256.6 L301.2,2281.4 L309.2,2256.6 Z" stroke="#16a35c" stroke-width="3"/>
<path d="M623.2,2395.6 L636,2407 L623.2,2418.4" stroke="#16a35c" stroke-width="3.4"/>

<!-- ===== header ===== -->
<rect x="899.1" y="79.8" width="38.1" height="38.2" rx="12.5" stroke="#4a4744" stroke-width="3.6"/>
<path d="M910.7,80 V118 M924.1,93.8 L918,98.9 L924.1,104.1" stroke="#4a4744" stroke-width="3.6"/>
<!-- analytics -->
<g stroke="#a39f9a" stroke-width="3.5">
<rect x="941" y="219.8" width="30.7" height="21.2" rx="3.2"/>
<path d="M956.3,215.6 V218.5 M950.9,242.6 L947.1,247.2 M961.8,242.6 L965.6,247.2 M950.5,231.6 V234.4 M956.3,229.2 V234.4 M962.1,226.6 V234.4"/>
</g>
<!-- comments (filled) -->
<path d="M1243.4,215.7 A16.5,16.5 0 1 1 1235.6,246.7 L1229.4,248.6 Q1226.6,249.2 1227.4,246.4 L1229.6,240.8 A16.5,16.5 0 0 1 1243.4,215.7 Z" fill="#0a3b2b"/>
<circle cx="1236.2" cy="232.2" r="2.1" fill="#f5f0ec"/><circle cx="1243.3" cy="232.2" r="2.1" fill="#f5f0ec"/><circle cx="1250.4" cy="232.2" r="2.1" fill="#f5f0ec"/>
<!-- stakeholder access -->
<g stroke="#5f5c58" stroke-width="2.1">
<circle cx="1551.6" cy="223.4" r="4.5"/><circle cx="1564.7" cy="223.4" r="4.5"/>
<circle cx="1551.6" cy="237.7" r="4.5"/><circle cx="1564.7" cy="237.7" r="4.5"/>
<path d="M1544.3,231.8 A8.4,8.4 0 0 1 1558.2,231 A8.4,8.4 0 0 1 1572.1,231.8 M1544.3,246.4 A8.4,8.4 0 0 1 1558.2,245.6 A8.4,8.4 0 0 1 1572.1,246.4"/>
</g>
<!-- download reports chevron -->
<path d="M3146.6,94.2 L3158,105.8 L3169.4,94.2" stroke="#44403c" stroke-width="3.4"/>
<!-- share -->
<g stroke="#fff" stroke-width="3.3">
<path d="M3278.7,98.9 L3294.3,88.9 M3278.7,98.9 L3294.3,109"/>
<circle cx="3294.3" cy="88.9" r="4.6" fill="#0a3b2b"/><circle cx="3278.7" cy="98.9" r="4.6" fill="#0a3b2b"/><circle cx="3294.3" cy="109" r="4.6" fill="#0a3b2b"/>
</g>
<!-- atom -->
<g stroke-width="3.4">
<ellipse cx="3743" cy="97.6" rx="8.6" ry="23" stroke="#8fc3a0"/>
<ellipse cx="3743" cy="97.6" rx="23" ry="8.6" stroke="#8fc3a0"/>
<ellipse cx="3743" cy="97.6" rx="22.6" ry="9.2" stroke="#0d7a40" stroke-width="3.7" transform="rotate(45 3743 97.6)"/>
<ellipse cx="3743" cy="97.6" rx="22.6" ry="9.2" stroke="#0d7a40" stroke-width="3.7" transform="rotate(-45 3743 97.6)"/>
<circle cx="3743" cy="97.6" r="2.6" fill="#0d7a40" stroke="none"/>
</g>
<!-- download -->
<path d="M3437.5,349.2 V370.4 M3427,360.6 L3437.5,371 L3448,360.6 M3423.2,378.4 H3451.8" stroke="#44403c" stroke-width="3.4"/>
<!-- kebab -->
<circle cx="3747.5" cy="351.6" r="4.5" fill="#7b7671"/><circle cx="3747.5" cy="364.1" r="4.5" fill="#7b7671"/><circle cx="3747.5" cy="376.6" r="4.5" fill="#7b7671"/>
<!-- filter + chevron -->
<path d="M3606.4,501.2 H3640.3 M3612.6,511.2 H3633.8 M3619.4,521.2 H3627.4" stroke="#57534e" stroke-width="2.6"/>
<path d="M3733.8,507.2 L3745,518.6 L3756.2,507.2" stroke="#44403c" stroke-width="3.2"/>
<!-- comment badge bubble -->
<path d="M2835.1,2323.4 A16.9,16.9 0 1 0 2828.1,2316.4 L2826.2,2325.4 Z M2836.6,2304.9 H2849.4 M2836.6,2311.9 H2849.4" stroke="#44403c" stroke-width="4.2"/>
</svg>
<!-- floating popup -->
<div class="b" style="left:1600px;top:2352.5px;width:616.5px;height:99.5px;border-radius:17px;background:#fff;border:2px solid #e3e0dc;box-shadow:0 14px 26px rgba(40,30,20,0.13),0 3px 6px rgba(40,30,20,0.06)"></div>
<svg width="3840" height="2504" viewBox="0 0 3840 2504" fill="none" stroke-linecap="round" stroke-linejoin="round">
<path d="M1657.4,2420 V2403.8 A16.4,16.4 0 1 1 1673.8,2420.2 Z" stroke="#44403c" stroke-width="4.2"/>
<circle cx="2009.6" cy="2400.2" r="13.5" stroke="#44403c" stroke-width="4.4"/>
<path d="M2019.6,2410.4 L2031.8,2421.4" stroke="#44403c" stroke-width="4.4"/>
</svg>
<span id="t66" class="t" style="font-size:37.08px;color:#44403c;top:2386.25px;letter-spacing:-0.786px;left:1714.63px;-webkit-text-stroke:0.45px #44403c;">Add Comment</span>
<span id="t67" class="t" style="font-size:37.08px;color:#44403c;top:2386.25px;letter-spacing:-1.019px;left:2053.02px;-webkit-text-stroke:0.45px #44403c;">Search</span>
</div></body></html>
